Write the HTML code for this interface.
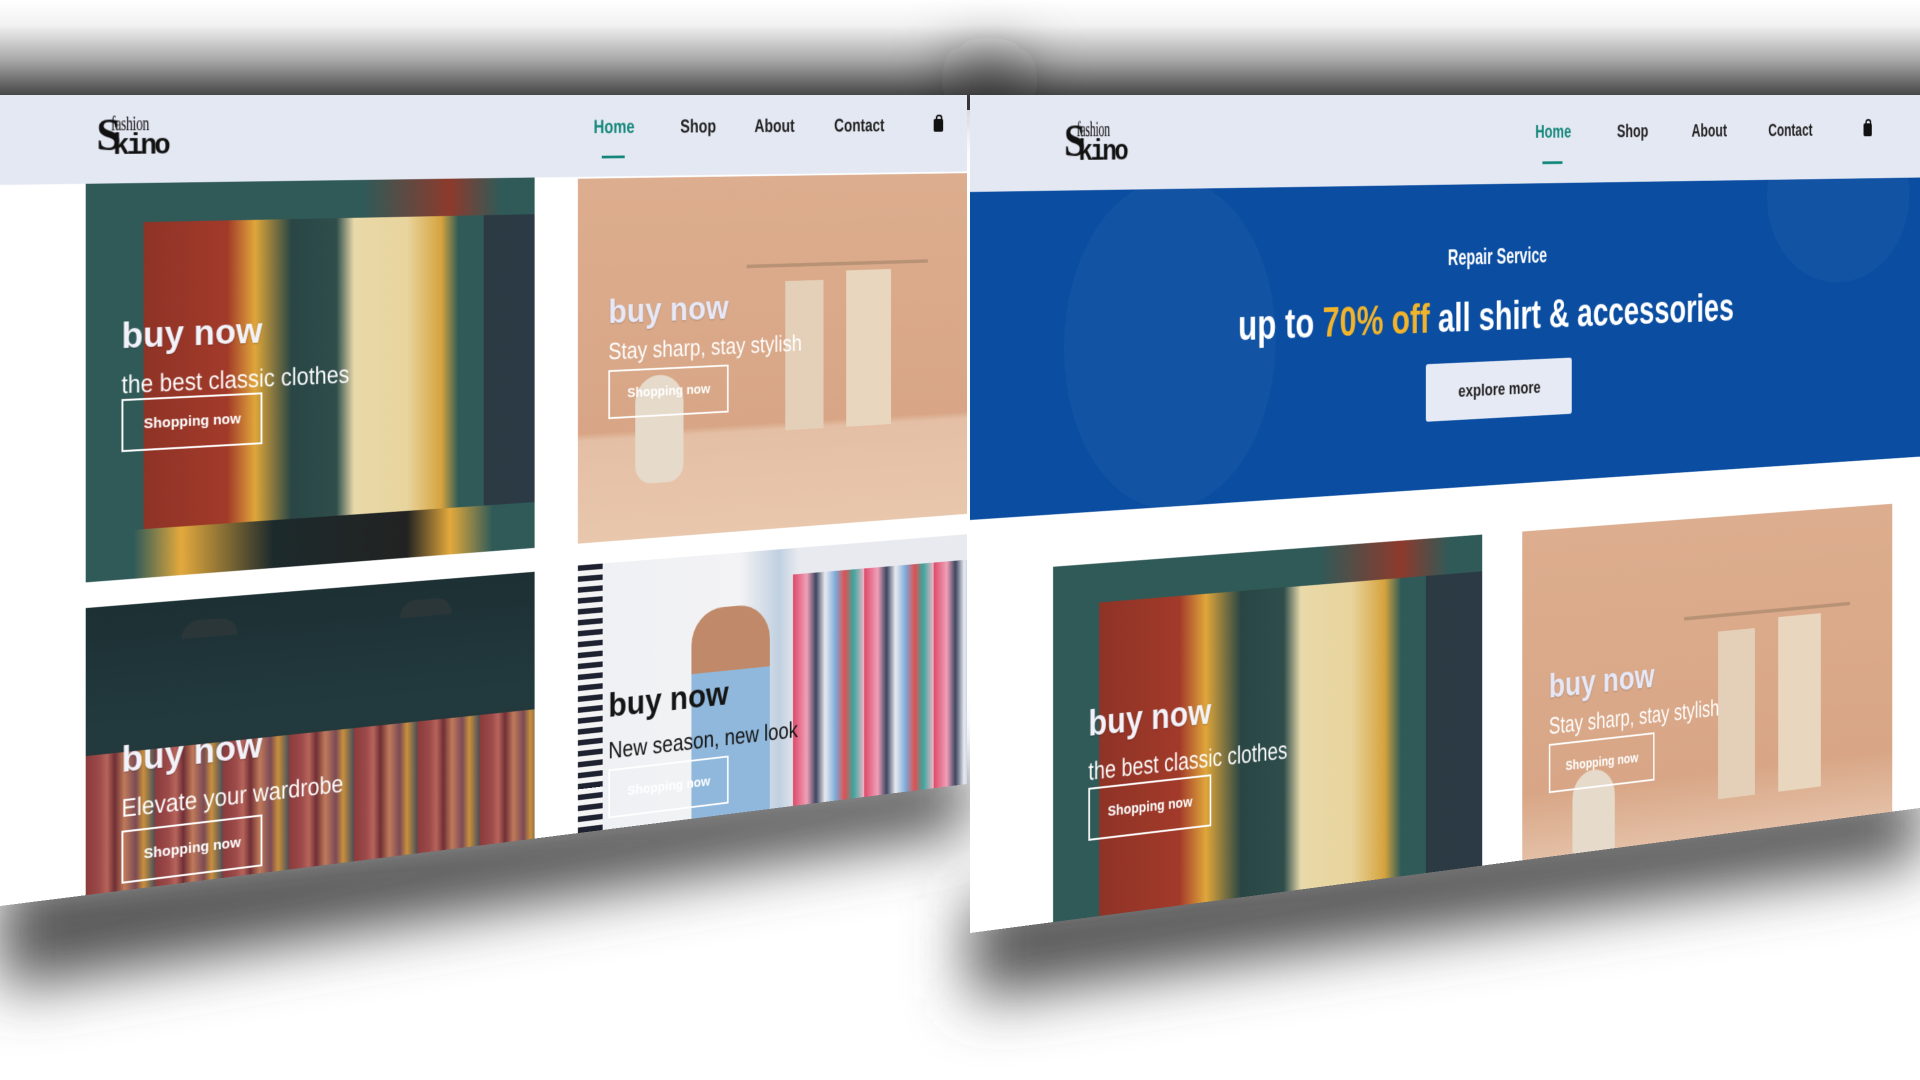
<!DOCTYPE html>
<html><head><meta charset="utf-8">
<style>
*{margin:0;padding:0;box-sizing:border-box}
html,body{width:1920px;height:1080px;overflow:hidden;background:#fff;font-family:"Liberation Sans",sans-serif}
.bg{position:absolute;left:0;top:0;width:1920px;height:110px;background:linear-gradient(#fff 0px,#f2f2f2 25px,#a8a8a8 60px,#5a5a5a 88px,#3a3a3a 100px)}
.sh{position:absolute;left:0;top:0}
.panel{position:absolute;left:0;top:0;transform-origin:0 0;overflow:hidden;background:#fff}
#L{width:1140px;height:811px;transform:matrix3d(0.99845,0.014754,0,0.00015533,0,1,0,0,0,0,1,0,0,95,0,1)}
#R{width:1287px;height:838px;transform:matrix3d(0.99969,0.012937,0,0.00013622,0,1,0,0,0,0,1,0,970,95,0,1)}
.nav{position:absolute;left:0;top:0;width:100%;background:#e4e8f3}
.logo{position:absolute;width:80px;height:48px}
.logo .s{position:absolute;left:0;top:-4px;font:bold 46px "Liberation Serif",serif;color:#111}
.logo .f{position:absolute;left:15px;top:-2px;font:22px "Liberation Serif",serif;color:#111;transform:scaleX(.65);transform-origin:0 0;letter-spacing:-0.5px}
.logo .k{position:absolute;left:17px;top:18px;font:bold 29px "Liberation Mono",monospace;color:#111;letter-spacing:-3px}
.nl{position:absolute;font-size:21px;font-weight:bold;color:#222;transform:scaleX(.86);transform-origin:0 50%}
.home{color:#13877a}
.ul{position:absolute;height:3px;width:28px;background:#13877a}
.bag{position:absolute;width:13px;height:15px;background:#111;border-radius:2px}
.bag:before{content:"";position:absolute;left:3px;top:-5px;width:5px;height:6px;border:2px solid #111;border-bottom:none;border-radius:4px 4px 0 0}
.card{position:absolute;overflow:hidden}
.t1{position:absolute;left:37px;font-weight:bold;font-size:37px;color:#f2f2fa;text-shadow:0 1px 2px rgba(0,0,0,.2)}
.t2{position:absolute;left:37px;font-size:26px;color:#fff;transform:scaleX(.92);transform-origin:0 0}
.btn{position:absolute;left:37px;width:150px;height:54px;border:2px solid #fff;color:#fff;font-weight:bold;font-size:15px;line-height:50px;text-align:center}
.dark .t1,.dark .t2{color:#151515;text-shadow:none}
</style></head><body>
<div class="bg"></div>
<svg class="sh" width="1920" height="1080">
<defs><filter id="b" x="-100%" y="-200%" width="300%" height="500%"><feGaussianBlur stdDeviation="30"/></filter></defs>
<polygon points="0,880 967,760 967,830 0,990" fill="#555" filter="url(#b)"/>
<polygon points="970,900 1920,780 1920,860 970,1000" fill="#555" filter="url(#b)"/>
<polygon points="950,65 1030,65 1010,100 965,100" fill="#222" filter="url(#b)"/>
</svg>

<div class="panel" id="L">
  <div class="nav" style="height:90px">
    <div class="logo" style="left:98px;top:18px"><span class="s">S</span><span class="f">fashion</span><span class="k">kino</span></div>
    <div class="nl home" style="left:655px;top:24px">Home</div>
    <div class="ul" style="left:665px;top:67px"></div>
    <div class="nl" style="left:762px;top:24px">Shop</div>
    <div class="nl" style="left:856px;top:24px">About</div>
    <div class="nl" style="left:960px;top:24px">Contact</div>
    <div class="bag" style="left:1094px;top:28px"></div>
  </div>
  <div class="card" style="left:87px;top:90px;width:497px;height:404px;background:linear-gradient(90deg,#2f5a58 0,#2f5a58 12%,#8e3326 12%,#a23a2a 30%,#e0a63a 36%,#294645 44%,#2e4d4b 54%,#e9d9a9 58%,#e8d49d 70%,#d6a33d 78%,#2f5a58 82%,#2f5a58 88%,#2c3a44 88%,#2b3a44 100%)">
    <div style="position:absolute;left:0;top:0;width:100%;height:40px;background:linear-gradient(90deg,#2f5a58 60%,#8d3a2c 80%,#2f5a58 92%)"></div>
    <div style="position:absolute;left:0;bottom:0;width:100%;height:50px;background:linear-gradient(90deg,#2f5a58 10%,#e3a93c 20%,#1d2a2c 40%,#222 70%,#e3a93c 80%,#2f5a58 90%)"></div>
    <div class="t1" style="top:135px">buy now</div>
    <div class="t2" style="top:190px">the best classic clothes</div>
    <div class="btn" style="top:220px">Shopping now</div>
  </div>
  <div class="card" style="left:636px;top:92px;width:504px;height:401px;background:linear-gradient(180deg,#dcad8e 0,#d8a686 70%,#e4bfa5 72%,#e8c7ad 100%)">
    <div style="position:absolute;left:210px;top:100px;width:240px;height:4px;background:#b89274"></div>
    <div style="position:absolute;left:260px;top:120px;width:50px;height:170px;background:#e4d0b8"></div>
    <div style="position:absolute;left:340px;top:110px;width:60px;height:180px;background:#e9d6bf"></div>
    <div style="position:absolute;left:70px;top:220px;width:60px;height:120px;border-radius:30px 30px 20px 20px;background:#e6dacb"></div>
    <div class="t1" style="top:127px;color:#e6e8f8">buy now</div>
    <div class="t2" style="top:176px">Stay sharp, stay stylish</div>
    <div class="btn" style="top:212px">Shopping now</div>
  </div>
  <div class="card" style="left:87px;top:520px;width:497px;height:300px;background:linear-gradient(180deg,#1d3034 0,#223a3e 45%,#2a2a2a 100%)">
    <div style="position:absolute;left:0;top:150px;width:100%;height:150px;background:repeating-linear-gradient(90deg,#8a3b3a 0,#9c4a4a 14px,#b7645a 22px,#6f2f35 30px,#c07a5a 40px,#7a4a55 52px,#c9903c 60px,#4a4f5a 72px)"></div>
    <div style="position:absolute;left:100px;top:22px;width:60px;height:18px;border-radius:30px 30px 0 0;background:#2b3638"></div>
    <div style="position:absolute;left:340px;top:20px;width:60px;height:18px;border-radius:30px 30px 0 0;background:#2b3638"></div>
    <div class="t1" style="top:137px">buy now</div>
    <div class="t2" style="top:192px">Elevate your wardrobe</div>
    <div class="btn" style="top:230px">Shopping now</div>
  </div>
  <div class="card dark" style="left:636px;top:517px;width:504px;height:300px;background:linear-gradient(90deg,#eef0f3 0,#f3f3f5 40%,#c0d0e0 50%,#e9eaf0 55%)">
    <div style="position:absolute;left:0;top:0;width:30px;height:300px;background:repeating-linear-gradient(180deg,#1e2230 0,#1e2230 6px,#f4f4f4 6px,#f4f4f4 12px)"></div>
    <div style="position:absolute;left:270px;top:30px;width:234px;height:270px;background:repeating-linear-gradient(90deg,#dc4a6a 0,#f0a0b8 18px,#3c4660 30px,#eaeaf0 42px,#7aaad8 56px,#e05050 68px,#3aa8a0 80px,#f2b3c5 94px)"></div>
    <div style="position:absolute;left:140px;top:60px;width:100px;height:240px;border-radius:40px 40px 0 0;background:linear-gradient(#c08a6a 0,#c08a6a 30%,#8fb8dc 30%,#8fb8dc 100%)"></div>
    <div class="t1" style="top:137px">buy now</div>
    <div class="t2" style="top:192px">New season, new look</div>
    <div class="btn" style="top:228px;border-color:#fff">Shopping now</div>
  </div>
</div>

<div class="panel" id="R">
  <div class="nav" style="height:97px">
    <div class="logo" style="left:110px;top:24px"><span class="s">S</span><span class="f">fashion</span><span class="k">kino</span></div>
    <div class="nl home" style="left:715px;top:29px">Home</div>
    <div class="ul" style="left:725px;top:73px"></div>
    <div class="nl" style="left:830px;top:29px">Shop</div>
    <div class="nl" style="left:938px;top:29px">About</div>
    <div class="nl" style="left:1052px;top:29px">Contact</div>
    <div class="bag" style="left:1198px;top:33px"></div>
  </div>
  <div style="position:absolute;left:0;top:97px;width:100%;height:328px;background:#0a4da1;overflow:hidden">
    <div style="position:absolute;left:110px;top:-10px;width:260px;height:340px;border-radius:50%;background:rgba(255,255,255,.04)"></div>
    <div style="position:absolute;left:1050px;top:-80px;width:220px;height:200px;border-radius:50%;background:rgba(255,255,255,.04)"></div>
    <div style="position:absolute;left:20px;top:66px;width:100%;text-align:center;font-size:23px;font-weight:bold;color:#fff;transform:scaleX(.85)">Repair Service</div>
    <div style="position:absolute;left:18px;top:118px;width:100%;text-align:center;font-size:45px;font-weight:bold;color:#fff;transform:scaleX(.88)">up to <span style="color:#f1b42a">70% off</span> all shirt &amp; accessories</div>
    <div style="position:absolute;left:566px;top:193px;width:200px;height:62px;background:#e6eaf4;border-radius:3px;text-align:center;line-height:62px;font-size:18px;font-weight:bold;color:#222">explore more</div>
  </div>
  <div class="card" style="left:97px;top:478px;width:545px;height:360px;background:linear-gradient(90deg,#2f5a58 0,#2f5a58 10%,#8e3326 10%,#a23a2a 28%,#e0a63a 34%,#294645 42%,#2e4d4b 52%,#e9d9a9 56%,#e8d49d 68%,#d6a33d 76%,#2f5a58 80%,#2f5a58 86%,#2c3a44 86%,#2b3a44 100%)">
    <div style="position:absolute;left:0;top:0;width:100%;height:40px;background:linear-gradient(90deg,#2f5a58 60%,#8d3a2c 80%,#2f5a58 92%)"></div>
    <div class="t1" style="top:142px;left:42px">buy now</div>
    <div class="t2" style="top:196px;left:42px">the best classic clothes</div>
    <div class="btn" style="top:228px;left:42px">Shopping now</div>
  </div>
  <div class="card" style="left:697px;top:478px;width:546px;height:360px;background:linear-gradient(180deg,#dcad8e 0,#d8a686 80%,#e4bfa5 100%)">
    <div style="position:absolute;left:230px;top:110px;width:250px;height:4px;background:#b89274"></div>
    <div style="position:absolute;left:280px;top:130px;width:55px;height:190px;background:#e4d0b8"></div>
    <div style="position:absolute;left:370px;top:120px;width:65px;height:200px;background:#e9d6bf"></div>
    <div style="position:absolute;left:70px;top:270px;width:60px;height:120px;border-radius:30px;background:#e6dacb"></div>
    <div class="t1" style="top:152px;color:#e6e8f8">buy now</div>
    <div class="t2" style="top:201px">Stay sharp, stay stylish</div>
    <div class="btn" style="top:236px">Shopping now</div>
  </div>
</div>
</body></html>
